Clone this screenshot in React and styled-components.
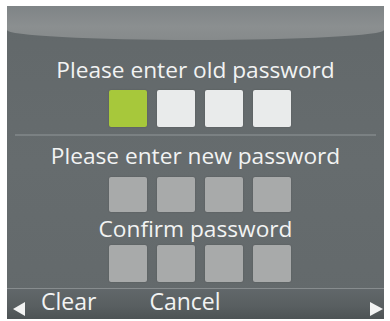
import React from "react";
import styled, { createGlobalStyle } from "styled-components";

const Global = createGlobalStyle`
  html, body { margin: 0; padding: 0; background: #ffffff; }
  body { font-family: "Open Sans", "Liberation Sans", sans-serif; }
`;

const Frame = styled.div`
  width: 390px;
  height: 321px;
  box-sizing: border-box;
  padding: 6px 6px 2px 7px;
`;

const Panel = styled.div`
  width: 377px;
  height: 313px;
  display: flex;
  flex-direction: column;
  background: linear-gradient(180deg, #62686a 0%, #666c6e 50%, #63696b 100%);
  overflow: hidden;
`;

const Header = styled.div`
  height: 34px;
  flex: none;
  background: linear-gradient(180deg, #7f8486 0%, #8b8f90 60%, #868a8b 100%);
  border-radius: 0 0 50% 50% / 0 0 10px 10px;
`;

const Title = styled.div`
  font-size: 22.7px;
  line-height: 26px;
  color: #f2f3f3;
  text-align: center;
  margin-top: ${(p) => p.$mt}px;
`;

const Squares = styled.div`
  display: flex;
  justify-content: center;
  gap: 10px;
  padding-left: 8px;
  margin-top: ${(p) => p.$mt}px;
`;

const Square = styled.div`
  width: 38px;
  height: ${(p) => p.$h || 38}px;
  border-radius: 2px;
  background: ${(p) =>
    p.$state === "active" ? "#a7c83b" : p.$state === "empty" ? "#e9ebeb" : "#a8aaaa"};
  box-shadow: 0 0 1.5px rgba(0, 0, 0, 0.25);
`;

const Separator = styled.div`
  height: 2px;
  flex: none;
  margin: ${(p) => p.$mt}px 8px 0 8px;
  background: #7b8183;
`;

const BottomBar = styled.div`
  margin-top: auto;
  height: 30px;
  flex: none;
  display: flex;
  align-items: flex-start;
  padding: 0 1px 0 6px;
  border-top: 1px solid #878c8e;
  background: linear-gradient(180deg, #61676a 0%, #585e60 60%, #4d5355 100%);
`;

const Arrow = styled.div`
  width: 0;
  height: 0;
  border-top: 7px solid transparent;
  border-bottom: 7px solid transparent;
  ${(p) =>
    p.$dir === "left"
      ? "border-right: 12px solid #f2f3f3;"
      : "border-left: 13px solid #f2f3f3;"}
  margin-top: 13px;
`;

const Action = styled.span`
  font-size: 23px;
  color: #f2f3f3;
  margin-left: ${(p) => p.$ml}px;
  line-height: 24px;
`;

const Spacer = styled.div`
  flex: 1;
`;

const rows = [
  { title: "Please enter old password", states: ["active", "empty", "empty", "empty"] },
  { title: "Please enter new password", states: ["off", "off", "off", "off"] },
  { title: "Confirm password", states: ["off", "off", "off", "off"] },
];

export default function App() {
  return (
    <>
      <Global />
      <Frame>
        <Panel>
          <Header />
          <Title $mt={17}>{rows[0].title}</Title>
          <Squares $mt={7}>
            {rows[0].states.map((s, i) => (
              <Square key={i} $state={s} $h={37} />
            ))}
          </Squares>
          <Separator $mt={7} />
          <Title $mt={7}>{rows[1].title}</Title>
          <Squares $mt={8}>
            {rows[1].states.map((s, i) => (
              <Square key={i} $state={s} $h={35} />
            ))}
          </Squares>
          <Title $mt={4}>{rows[2].title}</Title>
          <Squares $mt={3}>
            {rows[2].states.map((s, i) => (
              <Square key={i} $state={s} $h={37} />
            ))}
          </Squares>
          <BottomBar>
            <Arrow $dir="left" />
            <Action $ml={16}>Clear</Action>
            <Action $ml={53}>Cancel</Action>
            <Spacer />
            <Arrow $dir="right" />
          </BottomBar>
        </Panel>
      </Frame>
    </>
  );
}
